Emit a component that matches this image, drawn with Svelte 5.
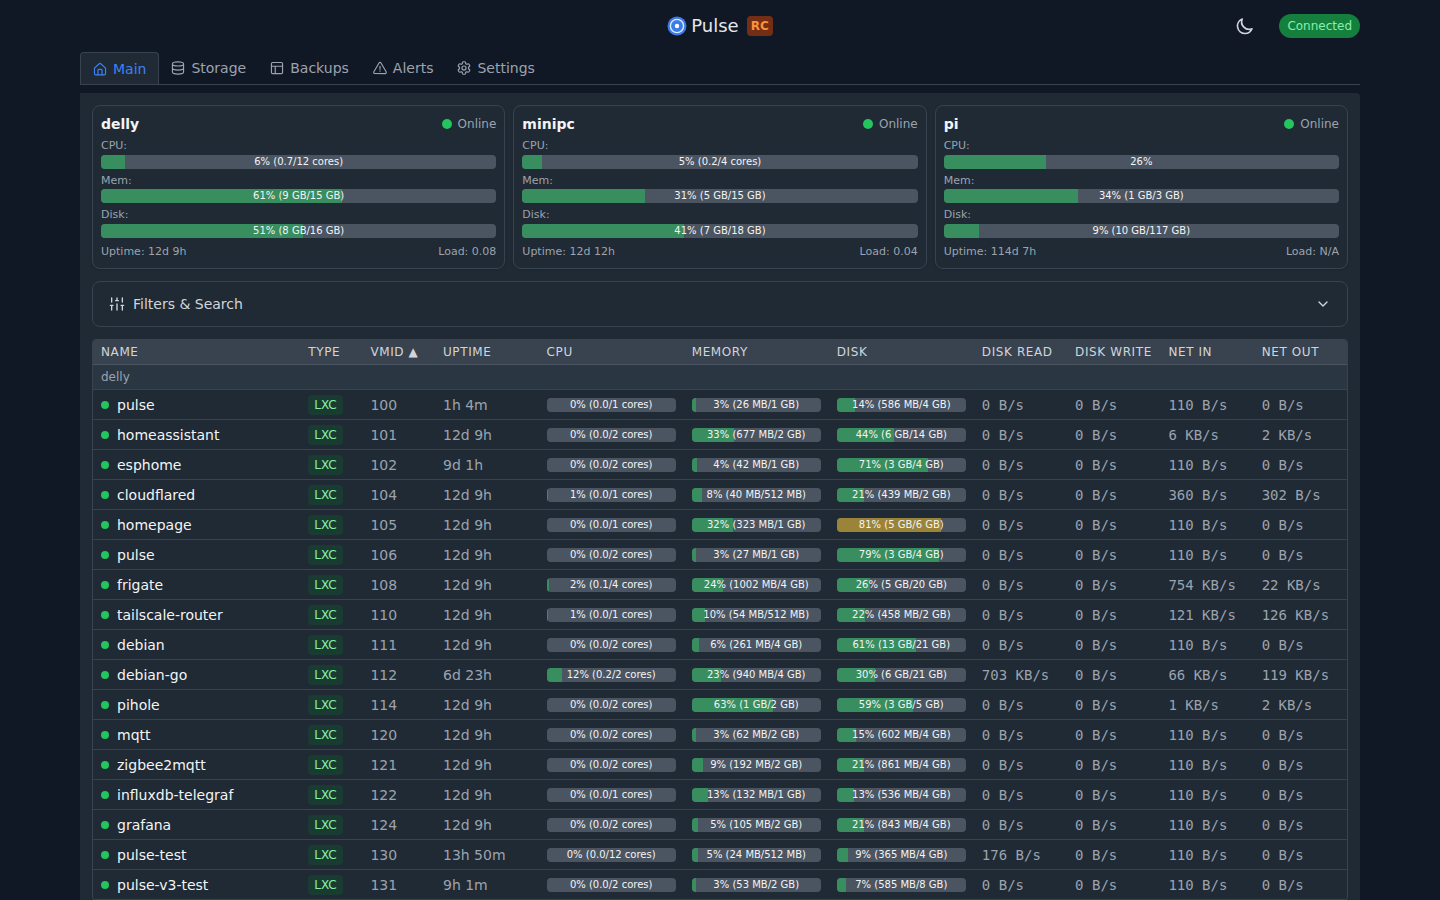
<script>
	const tabs = [
		{ id: 'main', label: 'Main' },
		{ id: 'storage', label: 'Storage' },
		{ id: 'backups', label: 'Backups' },
		{ id: 'alerts', label: 'Alerts' },
		{ id: 'settings', label: 'Settings' }
	];

	const columns = [
		{ key: 'name', label: 'Name' },
		{ key: 'type', label: 'Type' },
		{ key: 'vmid', label: 'VMID' },
		{ key: 'uptime', label: 'Uptime' },
		{ key: 'cpu', label: 'CPU' },
		{ key: 'memory', label: 'Memory' },
		{ key: 'disk', label: 'Disk' },
		{ key: 'rate', label: 'Disk Read' },
		{ key: 'rate', label: 'Disk Write' },
		{ key: 'rate', label: 'Net In' },
		{ key: 'rate', label: 'Net Out' }
	];

	const nodes = [
		{
			name: 'delly', uptime: '12d 9h', load: '0.08',
			usage: [['CPU', '6% (0.7/12 cores)'], ['Mem', '61% (9 GB/15 GB)'], ['Disk', '51% (8 GB/16 GB)']]
		},
		{
			name: 'minipc', uptime: '12d 12h', load: '0.04',
			usage: [['CPU', '5% (0.2/4 cores)'], ['Mem', '31% (5 GB/15 GB)'], ['Disk', '41% (7 GB/18 GB)']]
		},
		{
			name: 'pi', uptime: '114d 7h', load: 'N/A',
			usage: [['CPU', '26%'], ['Mem', '34% (1 GB/3 GB)'], ['Disk', '9% (10 GB/117 GB)']]
		}
	];

	// name, vmid, uptime, cpu, memory, disk, disk read, disk write, net in, net out
	const guests = [
		['pulse', 100, '1h 4m', '0% (0.0/1 cores)', '3% (26 MB/1 GB)', '14% (586 MB/4 GB)', '0 B/s', '0 B/s', '110 B/s', '0 B/s'],
		['homeassistant', 101, '12d 9h', '0% (0.0/2 cores)', '33% (677 MB/2 GB)', '44% (6 GB/14 GB)', '0 B/s', '0 B/s', '6 KB/s', '2 KB/s'],
		['esphome', 102, '9d 1h', '0% (0.0/2 cores)', '4% (42 MB/1 GB)', '71% (3 GB/4 GB)', '0 B/s', '0 B/s', '110 B/s', '0 B/s'],
		['cloudflared', 104, '12d 9h', '1% (0.0/1 cores)', '8% (40 MB/512 MB)', '21% (439 MB/2 GB)', '0 B/s', '0 B/s', '360 B/s', '302 B/s'],
		['homepage', 105, '12d 9h', '0% (0.0/1 cores)', '32% (323 MB/1 GB)', '81% (5 GB/6 GB)', '0 B/s', '0 B/s', '110 B/s', '0 B/s'],
		['pulse', 106, '12d 9h', '0% (0.0/2 cores)', '3% (27 MB/1 GB)', '79% (3 GB/4 GB)', '0 B/s', '0 B/s', '110 B/s', '0 B/s'],
		['frigate', 108, '12d 9h', '2% (0.1/4 cores)', '24% (1002 MB/4 GB)', '26% (5 GB/20 GB)', '0 B/s', '0 B/s', '754 KB/s', '22 KB/s'],
		['tailscale-router', 110, '12d 9h', '1% (0.0/1 cores)', '10% (54 MB/512 MB)', '22% (458 MB/2 GB)', '0 B/s', '0 B/s', '121 KB/s', '126 KB/s'],
		['debian', 111, '12d 9h', '0% (0.0/2 cores)', '6% (261 MB/4 GB)', '61% (13 GB/21 GB)', '0 B/s', '0 B/s', '110 B/s', '0 B/s'],
		['debian-go', 112, '6d 23h', '12% (0.2/2 cores)', '23% (940 MB/4 GB)', '30% (6 GB/21 GB)', '703 KB/s', '0 B/s', '66 KB/s', '119 KB/s'],
		['pihole', 114, '12d 9h', '0% (0.0/2 cores)', '63% (1 GB/2 GB)', '59% (3 GB/5 GB)', '0 B/s', '0 B/s', '1 KB/s', '2 KB/s'],
		['mqtt', 120, '12d 9h', '0% (0.0/2 cores)', '3% (62 MB/2 GB)', '15% (602 MB/4 GB)', '0 B/s', '0 B/s', '110 B/s', '0 B/s'],
		['zigbee2mqtt', 121, '12d 9h', '0% (0.0/2 cores)', '9% (192 MB/2 GB)', '21% (861 MB/4 GB)', '0 B/s', '0 B/s', '110 B/s', '0 B/s'],
		['influxdb-telegraf', 122, '12d 9h', '0% (0.0/1 cores)', '13% (132 MB/1 GB)', '13% (536 MB/4 GB)', '0 B/s', '0 B/s', '110 B/s', '0 B/s'],
		['grafana', 124, '12d 9h', '0% (0.0/2 cores)', '5% (105 MB/2 GB)', '21% (843 MB/4 GB)', '0 B/s', '0 B/s', '110 B/s', '0 B/s'],
		['pulse-test', 130, '13h 50m', '0% (0.0/12 cores)', '5% (24 MB/512 MB)', '9% (365 MB/4 GB)', '176 B/s', '0 B/s', '110 B/s', '0 B/s'],
		['pulse-v3-test', 131, '9h 1m', '0% (0.0/2 cores)', '3% (53 MB/2 GB)', '7% (585 MB/8 GB)', '0 B/s', '0 B/s', '110 B/s', '0 B/s']
	];

	let activeTab = $state('main');

	const selectTab = (e, id) => {
		e.preventDefault();
		activeTab = id;
	};
</script>

{#snippet bar(text)}
	{@const percent = parseInt(text)}
	<div class="bar">
		<div class="bar__fill" class:bar__fill--warn={percent >= 80} style="width: {percent}%"></div>
		<span class="bar__text">{text}</span>
	</div>
{/snippet}

{#snippet icon(id)}
	<svg class="icon" viewBox="0 0 24 24" aria-hidden="true">
		{#if id === 'main'}
			<path d="M2.500 10.500 10.600 3a2 2 0 0 1 2.800 0l8.100 7.500V20a2 2 0 0 1-2 2h-15a2 2 0 0 1-2-2z" />
			<path d="M8.500 22v-8a1.500 1.500 0 0 1 1.500-1.500h4a1.500 1.500 0 0 1 1.500 1.500v8" />
		{:else if id === 'storage'}
			<ellipse cx="12" cy="5" rx="9.500" ry="3.500" />
			<path d="M2.500 5v14c0 1.900 4.200 3.500 9.500 3.500s9.500-1.600 9.500-3.500V5M2.500 12c0 1.900 4.200 3.500 9.500 3.500s9.500-1.600 9.500-3.500" />
		{:else if id === 'backups'}
			<rect x="2.500" y="2.500" width="19" height="19" rx="2" />
			<path d="M2.500 9h19M9 21.500V9" />
		{:else if id === 'alerts'}
			<path d="M10.300 3.400 1.500 18.500a2 2 0 0 0 1.700 3h17.600a2 2 0 0 0 1.700-3L13.700 3.400a2 2 0 0 0-3.400 0zM12 9v5M12 17v.5" />
		{:else}
			<path d="M9.400 2.600c.1-.8.700-1.300 1.500-1.300h2.200c.8 0 1.400.5 1.500 1.300l.3 2.100 1.800 1 2-.8c.7-.3 1.400 0 1.800.6l1.200 2c.4.7.2 1.400-.3 1.900L19.700 10.800v2.400l1.700 1.400c.5.500.7 1.200.3 1.900l-1.200 2c-.4.600-1.100.9-1.800.6l-2-.8-1.800 1-.3 2.100c-.1.800-.7 1.300-1.500 1.300h-2.200c-.8 0-1.400-.5-1.500-1.300l-.3-2.100-1.800-1-2 .8c-.7.300-1.400 0-1.800-.6l-1.200-2c-.4-.7-.2-1.400.3-1.900l1.700-1.400v-2.400L2.600 9.400c-.5-.5-.7-1.200-.3-1.900l1.200-2c.4-.6 1.100-.9 1.800-.6l2 .8 1.800-1z" />
			<circle cx="12" cy="12" r="3.500" />
		{/if}
	</svg>
{/snippet}

<div class="page">
	<header class="header">
		<div class="brand">
			<svg class="brand__logo" viewBox="0 0 20 20" aria-hidden="true">
				<circle cx="10" cy="10" r="9.500" fill="#3b7be8" />
				<circle cx="10" cy="10" r="6.600" fill="none" stroke="#dbe8fd" stroke-width="1.400" />
				<circle cx="10" cy="10" r="2.200" fill="#fff" />
			</svg>
			<span class="brand__name">Pulse</span>
			<span class="brand__tag">RC</span>
		</div>
		<div class="header__actions">
			<button class="theme" type="button" aria-label="Toggle theme">
				<svg viewBox="0 0 24 24" aria-hidden="true">
					<path d="M20.354 15.354A9 9 0 0 1 8.646 3.646 9.003 9.003 0 0 0 12 21a9.003 9.003 0 0 0 8.354-5.646z" />
				</svg>
			</button>
			<span class="status">Connected</span>
		</div>
	</header>

	<nav class="tabs">
		{#each tabs as tab}
			<a href="#{tab.id}" class="tab" class:tab--active={activeTab === tab.id} onclick={(e) => selectTab(e, tab.id)}>
				{@render icon(tab.id)}
				{tab.label}
			</a>
		{/each}
	</nav>

	<main class="panel">
		<section class="nodes">
			{#each nodes as node}
				<article class="node">
					<div class="node__head">
						<h3>{node.name}</h3>
						<span class="node__state"><span class="dot dot--large"></span>Online</span>
					</div>
					<div class="node__usage">
						{#each node.usage as [label, text]}
							<div>
								<div class="node__label">{label}:</div>
								{@render bar(text)}
							</div>
						{/each}
					</div>
					<div class="node__foot">
						<span>Uptime: {node.uptime}</span>
						<span>Load: {node.load}</span>
					</div>
				</article>
			{/each}
		</section>

		<button class="filters" type="button" aria-expanded="false">
			<svg class="filters__icon" viewBox="0 0 24 24" aria-hidden="true">
				<path d="M4 21v-7M4 9V3M12 21v-9M12 7V3M20 21v-7M20 9V3M2 14h4M10 7h4M18 14h4" />
			</svg>
			<span>Filters &amp; Search</span>
			<svg class="filters__chevron" viewBox="0 0 24 24" aria-hidden="true">
				<path d="m6 9 6 6 6-6" />
			</svg>
		</button>

		<div class="table-wrap">
			<table>
				<thead>
					<tr>
						{#each columns as column}
							<th scope="col" class="col-{column.key}">{column.label}{column.key === 'vmid' ? ' ▲' : ''}</th>
						{/each}
					</tr>
				</thead>
				<tbody>
					<tr class="group">
						<td colspan="11">delly</td>
					</tr>
					{#each guests as [name, vmid, uptime, cpu, memory, disk, ...rates]}
						<tr>
							<td><div class="guest"><span class="dot"></span>{name}</div></td>
							<td><span class="type">LXC</span></td>
							<td>{vmid}</td>
							<td>{uptime}</td>
							<td>{@render bar(cpu)}</td>
							<td>{@render bar(memory)}</td>
							<td>{@render bar(disk)}</td>
							{#each rates as rate}
								<td class="rate">{rate}</td>
							{/each}
						</tr>
					{/each}
				</tbody>
			</table>
		</div>
	</main>
</div>

<style>
	:global(body) {
		background: #111825;
	}
	.page {
		box-sizing: border-box;
		max-width: 1280px;
		margin: 0 auto;
		color: #d1d5db;
		font-family: 'DejaVu Sans', sans-serif;
		font-size: 14px;
		line-height: 20px;
	}
	.page :global(svg) {
		fill: none;
		stroke: currentColor;
		stroke-width: 2;
		stroke-linecap: round;
		stroke-linejoin: round;
		flex-shrink: 0;
	}
	button {
		background: none;
		border: 0;
		color: inherit;
		font: inherit;
		cursor: pointer;
	}

	.header {
		display: grid;
		grid-template-columns: 1fr auto 1fr;
		align-items: center;
		padding: 8px 0;
	}
	.brand {
		grid-column: 2;
		display: flex;
		align-items: center;
		gap: 4px;
	}
	.page .brand__logo {
		width: 20px;
		height: 20px;
		stroke: none;
	}
	.brand__name {
		font-size: 18px;
		line-height: 28px;
		color: #e5e7eb;
	}
	.brand__tag {
		margin-left: 4px;
		padding: 2px 4px;
		border-radius: 4px;
		background: #752e16;
		color: #fb923c;
		font-size: 12px;
		font-weight: bold;
		line-height: 16px;
	}
	.header__actions {
		display: flex;
		align-items: center;
		justify-content: flex-end;
		gap: 16px;
	}
	.theme {
		display: flex;
		padding: 8px;
	}
	.theme svg {
		width: 20px;
		height: 20px;
	}
	.status {
		padding: 4px 8px;
		border-radius: 12px;
		background: #15803d;
		color: #86efac;
		font-size: 12px;
		line-height: 16px;
	}

	.tabs {
		display: flex;
		height: 32px;
		border-bottom: 1px solid #38434f;
		margin-bottom: 8px;
	}
	.tab {
		display: flex;
		align-items: center;
		gap: 6px;
		padding: 0 12px;
		color: #9ca3af;
		text-decoration: none;
	}
	.tab--active {
		border: 1px solid #38434f;
		border-bottom: 0;
		border-radius: 4px 4px 0 0;
		background: #1f2a35;
		color: #3b82f6;
	}
	.icon {
		width: 14px;
		height: 14px;
	}

	.panel {
		display: flex;
		flex-direction: column;
		gap: 12px;
		padding: 12px;
		border-radius: 0 4px 4px 4px;
		background: #1f2a35;
	}
	.nodes {
		display: grid;
		grid-template-columns: repeat(3, 1fr);
		gap: 8px;
	}
	.node {
		padding: 8px;
		border: 1px solid #38434f;
		border-radius: 8px;
		box-shadow: 0 1px 3px #0002;
	}
	.node__head,
	.node__foot {
		display: flex;
		justify-content: space-between;
	}
	.node__head h3 {
		margin: 0;
		font-size: 14px;
		color: #f3f4f6;
	}
	.node__state {
		display: flex;
		align-items: center;
		gap: 6px;
		font-size: 12px;
		color: #9ca3af;
	}
	.node__usage {
		display: grid;
		gap: 4px;
		margin: 4px 0 6px;
	}
	.node__label,
	.node__foot {
		color: #9ca3af;
		font-size: 11px;
		line-height: 1.5;
	}
	.dot {
		width: 8px;
		height: 8px;
		border-radius: 50%;
		background: #22c55e;
	}
	.dot--large {
		width: 10px;
		height: 10px;
	}

	.bar {
		position: relative;
		height: 14px;
		border-radius: 4px;
		background: #4b5561;
		overflow: hidden;
	}
	.bar__fill {
		height: 100%;
		background: #388e5f;
	}
	.bar__fill--warn {
		background: #9b8338;
	}
	.bar__text {
		position: absolute;
		inset: 0;
		color: #f3f4f6;
		font-size: 10px;
		line-height: 14px;
		text-align: center;
		white-space: nowrap;
	}

	.filters {
		display: flex;
		align-items: center;
		gap: 8px;
		padding: 12px 16px;
		border: 1px solid #38434f;
		border-radius: 8px;
	}
	.filters svg {
		width: 16px;
		height: 16px;
	}
	.filters__chevron {
		margin-left: auto;
	}

	.table-wrap {
		border: 1px solid #38434f;
		border-radius: 4px;
		overflow: hidden;
	}
	table {
		width: 100%;
		table-layout: fixed;
		border-collapse: separate;
		border-spacing: 0;
	}
	th,
	td {
		box-sizing: border-box;
		height: 30px;
		padding: 0 8px;
		border-bottom: 1px solid #38434f;
		text-align: left;
		white-space: nowrap;
		color: #9ca3af;
	}
	th {
		height: 25px;
		border-color: #4b5561;
		background: #38434f;
		color: #d1d5db;
		font-size: 12px;
		font-weight: normal;
		line-height: 16px;
		letter-spacing: 0.05em;
		text-transform: uppercase;
	}
	.col-name { width: 20%; }
	.col-type { width: 6%; }
	.col-vmid { width: 7%; }
	.col-uptime { width: 10%; }
	.col-cpu,
	.col-memory,
	.col-disk { width: 14%; }
	.col-rate { width: 9%; }

	.group td {
		height: 25px;
		background: #2b3643;
		font-size: 12px;
		line-height: 16px;
	}
	.guest {
		display: flex;
		align-items: center;
		gap: 8px;
		color: #f3f4f6;
	}
	.type {
		display: block;
		width: fit-content;
		padding: 2px 6px;
		border-radius: 4px;
		background: #1a3b32;
		color: #86efac;
		font-size: 12px;
		line-height: 16px;
	}
	.rate {
		font-family: 'DejaVu Sans Mono', monospace;
	}
</style>
